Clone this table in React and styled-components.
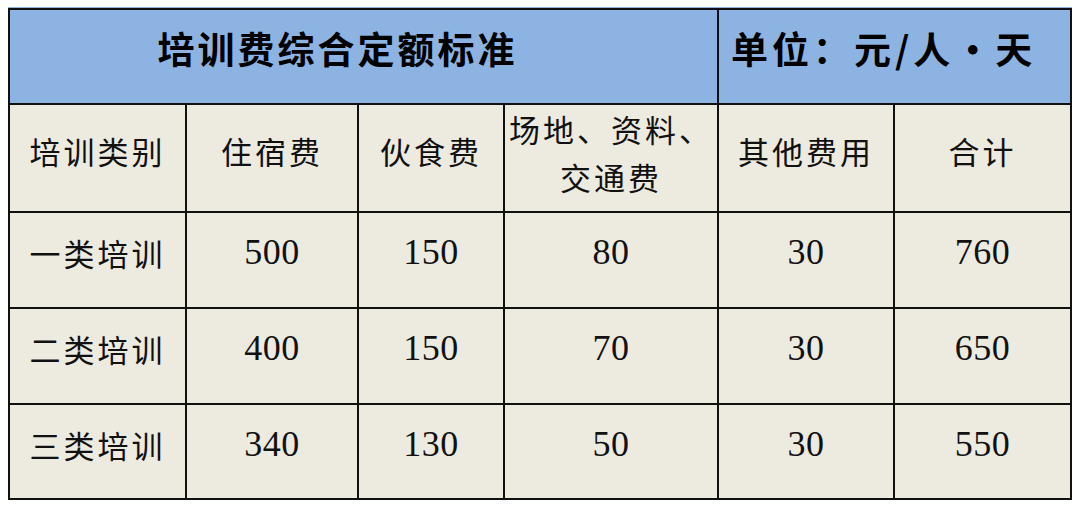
import styled, { createGlobalStyle } from "styled-components";

const GlobalStyle = createGlobalStyle`
  body {
    margin: 0;
    background: #ffffff;
  }
`;

const rows = [
  ["一类培训", "500", "150", "80", "30", "760"],
  ["二类培训", "400", "150", "70", "30", "650"],
  ["三类培训", "340", "130", "50", "30", "550"],
];

const App = () => {
  return (
    <Page>
      <GlobalStyle />
      <Grid>
        <TitleCell $span={4}>培训费综合定额标准</TitleCell>
        <UnitCell $span={2}>单位：元/人·天</UnitCell>

        <Cell>培训类别</Cell>
        <Cell>住宿费</Cell>
        <Cell>伙食费</Cell>
        <Cell $lines>
          场地、资料、
          <br />
          交通费
        </Cell>
        <Cell>其他费用</Cell>
        <Cell>合计</Cell>

        {rows.map((row) =>
          row.map((value, i) =>
            i === 0 ? (
              <Cell key={row[0] + i}>{value}</Cell>
            ) : (
              <NumCell key={row[0] + i}>{value}</NumCell>
            )
          )
        )}
      </Grid>
    </Page>
  );
};

const Page = styled.div`
  padding: 8px 0 0 8px;
  height: 511px;
  box-sizing: border-box;
`;

const Grid = styled.div`
  display: grid;
  width: max-content;
  grid-template-columns: 175px 170px 144px 212px 174px 175px;
  grid-template-rows: 93px 106px 94px 94px 93px;
  gap: 2px;
  padding: 2px;
  background: #111111;
  box-shadow: 0 -1px 0 #8db3e2;
`;

const HeadBase = styled.div`
  grid-column: span ${({ $span }) => $span};
  background: #8db3e2;
  display: flex;
  align-items: center;
  color: #000;
  font-family: "Noto Sans CJK SC", "Noto Sans", sans-serif;
  font-weight: 700;
  font-size: 37px;
  padding-bottom: 18px;
  box-sizing: border-box;
`;

const TitleCell = styled(HeadBase)`
  justify-content: center;
  padding-right: 52px;
  letter-spacing: 3px;
`;

const UnitCell = styled(HeadBase)`
  padding-left: 12px;
  letter-spacing: 4px;
`;

const Cell = styled.div`
  background: #edeae0;
  display: flex;
  align-items: center;
  justify-content: center;
  text-align: center;
  color: #111;
  font-family: "Noto Sans CJK SC", "Noto Sans", sans-serif;
  font-weight: 400;
  font-size: 31px;
  letter-spacing: 3px;
  line-height: ${({ $lines }) => ($lines ? "48px" : "1.2")};
  padding-bottom: ${({ $lines }) => ($lines ? "10px" : "14px")};
  box-sizing: border-box;
`;

const NumCell = styled(Cell)`
  font-family: "Liberation Serif", "Times New Roman", serif;
  font-size: 36px;
  letter-spacing: 0.5px;
`;

export default App;
